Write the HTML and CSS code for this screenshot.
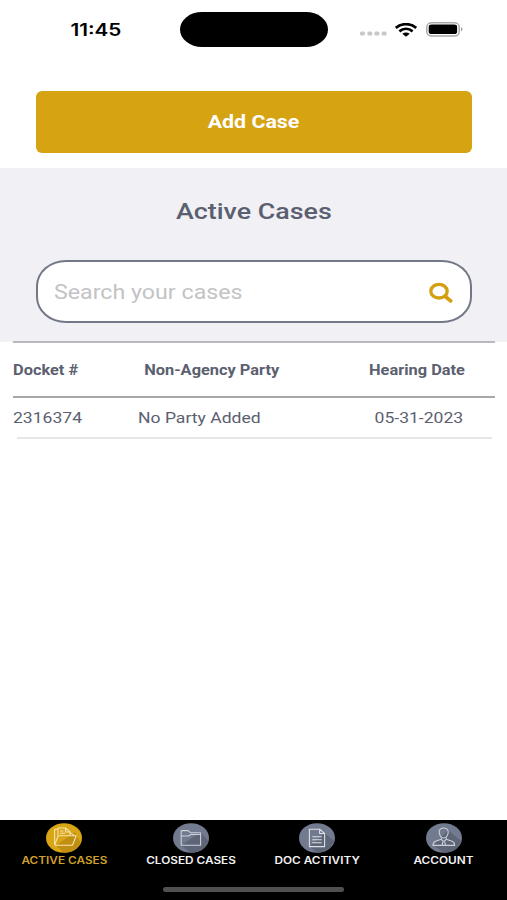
FILE: index.html
```
<!DOCTYPE html>
<html lang="en">
<head>
    <meta charset="UTF-8">
    <meta name="viewport" content="width=device-width, initial-scale=1.0">
    <title>Active Cases</title>
    <link rel="stylesheet" href="styles.css">
</head>
<body>
    <!-- Phone status bar -->
    <div class="status-bar">
        <div class="time"><span class="wide">11:45</span></div>
        <div class="island"></div>
        <div class="status-icons">
            <svg class="signal" width="27" height="5" viewBox="0 0 27 5">
                <g fill="#c8c8c8">
                    <rect x="0" y="0.5" width="5" height="4" rx="1.5"/>
                    <rect x="7.3" y="0.5" width="5" height="4" rx="1.5"/>
                    <rect x="14.4" y="0.5" width="5" height="4" rx="1.5"/>
                    <rect x="21.6" y="0.5" width="5" height="4" rx="1.5"/>
                </g>
            </svg>
            <svg class="wifi" width="22" height="14" viewBox="0 0 22 14">
                <g fill="none" stroke="#000" stroke-width="2.7">
                    <path d="M0.8 4.9C6.7 -0.1 15.3 -0.1 21.2 4.9"/>
                    <path d="M4.4 8.4C8.4 5 13.6 5 17.6 8.4"/>
                </g>
                <path d="M7.3 10.7C9.5 9 12.5 9 14.7 10.7L11 13.8Z" fill="#000"/>
            </svg>
            <svg class="battery" width="37" height="15" viewBox="0 0 37 15">
                <rect x="0.8" y="0.8" width="32.4" height="13.2" rx="5" ry="4" fill="#fff" stroke="#a9a9a9" stroke-width="1.5"/>
                <rect x="2.7" y="2.5" width="28.4" height="9.6" rx="3" ry="2.4" fill="#000"/>
                <path d="M35 5.3C37 6 37 8.6 35 9.3Z" fill="#999"/>
            </svg>
        </div>
    </div>

    <div class="add-case">
        <button class="add-button"><span class="wide">Add Case</span></button>
    </div>

    <!-- Title and search -->
    <div class="search-section">
        <h1><span class="wide">Active Cases</span></h1>
        <div class="search-box">
            <span class="wide placeholder">Search your cases</span>
            <svg width="25" height="21" viewBox="0 0 25 21">
                <ellipse cx="11" cy="9.2" rx="8.2" ry="6.8" fill="none" stroke="#d4a012" stroke-width="3.3"/>
                <path d="M17 14.2L22.6 18.9" fill="none" stroke="#d4a012" stroke-width="3.8" stroke-linecap="round"/>
            </svg>
        </div>
    </div>

    <!-- Cases table -->
    <div class="cases">
        <div class="row head">
            <div class="docket"><span class="wide">Docket #</span></div>
            <div class="party"><span class="wide">Non-Agency Party</span></div>
            <div class="date"><span class="wide">Hearing Date</span></div>
        </div>
        <div class="row">
            <div class="docket"><span class="wide">2316374</span></div>
            <div class="party"><span class="wide">No Party Added</span></div>
            <div class="date"><span class="wide">05-31-2023</span></div>
        </div>
        <div class="divider"></div>
    </div>

    <!-- Bottom tabs -->
    <footer>
        <nav>
            <a class="tab active">
                <svg width="36" height="30" viewBox="0 0 36 30">
                    <ellipse cx="18" cy="15" rx="18" ry="14.8" fill="#d9a514"/>
                    <path d="M10 22.5L28.5 9L34.6 19.5C31 27 25 29.5 18 29.8Z" fill="#c08e10"/>
                    <g fill="none" stroke="#f6e3b0" stroke-width="1.1" stroke-linejoin="round">
                        <path d="M8.6 22V6.2H12V12.5M12 12V5H19.5L24 8.8V12.3M19.5 5V9H24M14 8H17.5M14 10.3H19"/>
                        <path d="M8.6 22L12.2 12.7H30.2L26.5 22.2H8.6M24 9.6L28.2 12.4"/>
                    </g>
                </svg>
                <span class="wide">ACTIVE CASES</span>
            </a>
            <a class="tab">
                <svg width="36" height="30" viewBox="0 0 36 30">
                    <ellipse cx="18" cy="15" rx="18" ry="14.8" fill="#717a8e"/>
                    <path d="M8 22.4L27.5 9L35.2 18C32 27 25 29.5 18 29.8Z" fill="#5d6577"/>
                    <path d="M8.2 22.3V7.6H15.2L17.4 9.7H27.6V22.3ZM8.2 13H15.7L17.8 11.5H27.6" fill="none" stroke="#ccd0da" stroke-width="1.1" stroke-linejoin="round"/>
                </svg>
                <span class="wide">CLOSED CASES</span>
            </a>
            <a class="tab">
                <svg width="36" height="30" viewBox="0 0 36 30">
                    <ellipse cx="18" cy="15" rx="18" ry="14.8" fill="#717a8e"/>
                    <path d="M10.5 23.5L25.5 10L35 18C32 27 25 29.5 18 29.8Z" fill="#5d6577"/>
                    <g fill="none" stroke="#dcdfe6" stroke-width="1.1" stroke-linejoin="round">
                        <path d="M10.4 6.2H20.6L25.6 10.5V23.6H10.4ZM20.6 6.2V10.5H25.6"/>
                        <path d="M13.3 13.8H22.7M13.3 16.8H22.7M13.3 19.8H22.7"/>
                    </g>
                </svg>
                <span class="wide">DOC ACTIVITY</span>
            </a>
            <a class="tab">
                <svg width="36" height="30" viewBox="0 0 36 30">
                    <ellipse cx="18" cy="15" rx="18" ry="14.8" fill="#717a8e"/>
                    <path d="M7.5 22.5L22 7L35 18C32 27 25 29.5 18 29.8Z" fill="#5d6577"/>
                    <g fill="none" stroke="#ccd0da" stroke-width="1.1" stroke-linejoin="round">
                        <path d="M13.2 9C13.2 3.6 22.2 3.6 22.2 9C22.2 12.2 20.3 15 17.7 15C15.1 15 13.2 12.2 13.2 9Z"/>
                        <path d="M15.3 14.5V16.2L9.5 18.3C7.6 19 7 20.2 7 22.4H28.6C28.6 20.2 28 19 26.1 18.3L20.2 16.2V14.5"/>
                        <path d="M15.3 16.5L17.7 18.6L20.2 16.5M16.8 18.8L16.2 22.2M18.8 18.8L19.4 22.2"/>
                    </g>
                </svg>
                <span class="wide">ACCOUNT</span>
            </a>
        </nav>
        <div class="home-bar"></div>
    </footer>
</body>
</html>
```
FILE: styles.css
```
* {
    margin: 0;
    padding: 0;
    box-sizing: border-box;
}

body {
    display: flex;
    flex-direction: column;
    height: 900px;
    background-color: #fff;
    font-family: Roboto, sans-serif;
    color: #5b6070;
    overflow: hidden;
}

/* Extended lettering used for every label */
.wide {
    display: inline-block;
    white-space: nowrap;
    transform: scaleX(1.22);
}

.status-bar {
    display: flex;
    align-items: center;
    height: 59px;
}

.time {
    width: 180px;
    padding-left: 12px;
    text-align: center;
    font-family: Inter, sans-serif;
    font-size: 17px;
    font-weight: 600;
    color: #000;
}

.island {
    width: 148px;
    height: 35px;
    background-color: #000;
    border-radius: 22px / 17.5px;
}

.status-icons {
    display: flex;
    align-items: center;
    padding-left: 32px;
}

.signal {
    margin-top: 8px;
    margin-right: 8px;
}

.wifi {
    margin-right: 9px;
}

.battery {
    margin-top: -1px;
}

.add-case {
    height: 109px;
    padding: 32px 35px 0 36px;
}

.add-button {
    display: block;
    width: 100%;
    height: 62px;
    background-color: #d6a313;
    border: none;
    border-radius: 6px;
    color: #fff;
    font-family: inherit;
    font-size: 17.5px;
    font-weight: 700;
}

.search-section {
    height: 174px;
    padding: 30px 35px 0 36px;
    background-color: #f0f0f5;
}

h1 {
    height: 62px;
    text-align: center;
    font-size: 22px;
    font-weight: 500;
    line-height: 28px;
}

.search-box {
    display: flex;
    align-items: center;
    justify-content: space-between;
    height: 63px;
    padding: 1px 17px 0 16px;
    background-color: #fff;
    border: 2px solid #727886;
    border-radius: 30px / 26px;
}

.placeholder {
    padding-top: 1px;
    font-size: 19.5px;
    color: #c3c3c5;
    transform: scaleX(1.19);
    transform-origin: left;
}

.cases {
    flex: 1;
    margin-top: -1px;
    padding: 0 12px 0 13px;
}

.row {
    display: flex;
    align-items: center;
    height: 39px;
    padding-top: 1px;
    font-size: 15px;
}

.row .wide {
    transform: scaleX(1.17);
}

.head {
    height: 57px;
    border-top: 2px solid #b9b9bd;
    border-bottom: 2px solid #a8a8aa;
    font-size: 14px;
    font-weight: 700;
}

.docket {
    width: 125px;
}

.docket .wide,
.row:not(.head) .party .wide {
    transform-origin: left;
}

.party {
    width: 147px;
}

.head .party {
    padding-left: 1px;
    text-align: center;
}

.date {
    flex: 1;
    padding-left: 54px;
    text-align: center;
}

.row:not(.head) .date {
    padding-left: 58px;
}

.divider {
    height: 2px;
    margin: 0 3px 0 4px;
    background-color: #e6e6e6;
}

footer {
    height: 80px;
    background-color: #000;
}

nav {
    display: grid;
    grid-template-columns: repeat(4, 1fr);
    height: 68px;
    padding-top: 3px;
    padding-left: 1px;
}

.tab {
    display: flex;
    flex-direction: column;
    align-items: center;
    color: #f2f2f2;
    font-family: Inter, sans-serif;
    font-size: 10px;
    font-weight: 600;
    line-height: 15px;
}

.tab .wide {
    transform: scaleX(1.18);
}

.active {
    color: #d0a02a;
}

.home-bar {
    width: 181px;
    height: 5px;
    margin: -1px auto 0;
    background-color: #505050;
    border-radius: 3px;
}
```
